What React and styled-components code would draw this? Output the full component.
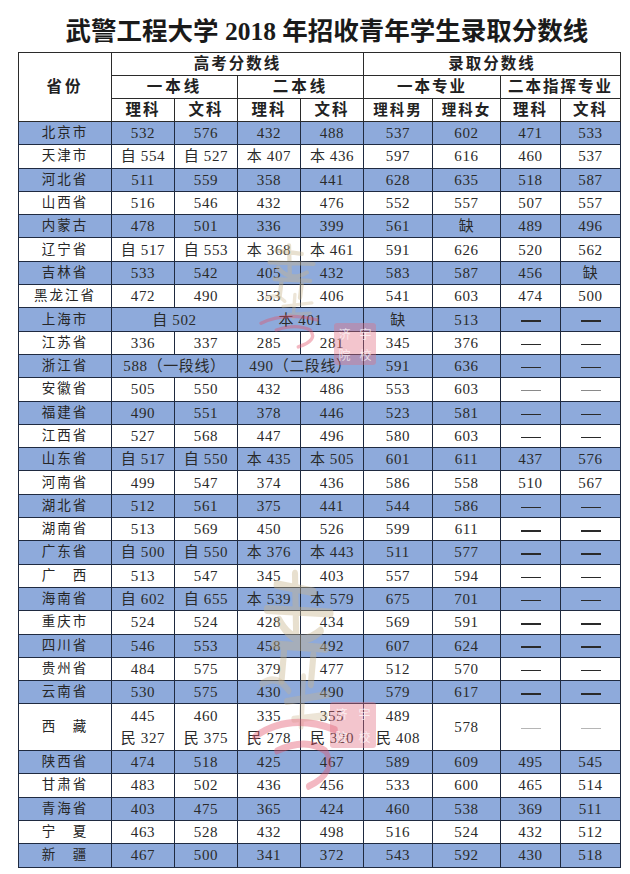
import React from "react";
import styled, { createGlobalStyle } from "styled-components";

const Global = createGlobalStyle`
  html, body { margin: 0; padding: 0; background: #fff; }
  body { font-family: "Liberation Serif", "Noto Sans CJK SC", serif; }
`;

const Page = styled.div`
  width: 630px;
  height: 874px;
  display: flex;
  flex-direction: column;
  align-items: flex-start;
  background: #fff;
  overflow: hidden;
`;

const Title = styled.h1`
  align-self: stretch;
  margin: 16px 0 0;
  padding-left: 24px;
  height: 36px;
  font-family: "Liberation Serif", "Noto Sans CJK SC", serif;
  font-size: 25.5px;
  line-height: 32px;
  font-weight: 700;
  color: #1a1a1a;
  text-align: center;
  white-space: nowrap;
`;

const TableWrap = styled.div`
  position: relative;
  margin-left: 18px;
`;

const Table = styled.table`
  border-collapse: collapse;
  table-layout: fixed;
  width: 602px;
  border: 1px solid #1f2a40;
`;

const HeadCell = styled.th`
  height: 22px;
  padding: 0;
  border: 1px solid #2b2b2b;
  background: #fff;
  color: #222;
  font-family: "Liberation Serif", "Noto Sans CJK SC", serif;
  font-size: ${(p) => (p.$small ? 14.5 : 15.5)}px;
  font-weight: 700;
  letter-spacing: ${(p) => (p.$wide ? 3 : 2)}px;
  text-align: center;
  vertical-align: middle;
  line-height: 18px;
`;

const Row = styled.tr`
  background: ${(p) => (p.$blue ? "#8eaadb" : "#ffffff")};
  height: ${(p) => (p.$double ? 46.6 : 23.3)}px;
`;

const NameCell = styled.td`
  padding: 0;
  border: 1px solid #1f2a40;
  color: #262626;
  font-size: 13.5px;
  letter-spacing: 2px;
  text-align: center;
  vertical-align: middle;
  line-height: 16px;
  white-space: pre;
`;

const Cell = styled.td`
  padding: 0;
  border: 1px solid #1f2a40;
  color: ${(p) => (p.$muted ? "#b5b5b5" : p.$soft ? "#8a8a8a" : "#2a2a2a")};
  font-size: 15px;
  letter-spacing: 0.6px;
  text-align: center;
  vertical-align: middle;
  line-height: 22px;
  white-space: nowrap;
`;

const Dash = styled.span`
  display: inline-block;
  width: 20px;
  height: ${(p) => (p.$thin ? 1 : 1.5)}px;
  vertical-align: middle;
  background: currentColor;
`;

const Mark = styled.svg`
  position: absolute;
  left: ${(p) => p.$x}px;
  top: ${(p) => p.$y}px;
  pointer-events: none;
  opacity: 0.75;
`;

const Seal = styled.div`
  position: absolute;
  left: ${(p) => p.$x}px;
  top: ${(p) => p.$y}px;
  width: ${(p) => p.$s}px;
  height: ${(p) => p.$s}px;
  display: grid;
  grid-template-columns: 1fr 1fr;
  align-items: center;
  border-radius: 3px;
  background: rgba(226, 110, 130, 0.4);
  color: rgba(255, 255, 255, 0.7);
  font-family: "Noto Sans CJK SC", sans-serif;
  font-size: 12px;
  line-height: 14px;
  text-align: center;
  pointer-events: none;
`;

const D = "—";

const rows = [
  ["北京市", ["532", "576", "432", "488", "537", "602", "471", "533"]],
  ["天津市", ["自 554", "自 527", "本 407", "本 436", "597", "616", "460", "537"]],
  ["河北省", ["511", "559", "358", "441", "628", "635", "518", "587"]],
  ["山西省", ["516", "546", "432", "476", "552", "557", "507", "557"]],
  ["内蒙古", ["478", "501", "336", "399", "561", "缺", "489", "496"]],
  ["辽宁省", ["自 517", "自 553", "本 368", "本 461", "591", "626", "520", "562"]],
  ["吉林省", ["533", "542", "405", "432", "583", "587", "456", "缺"]],
  ["黑龙江省", ["472", "490", "353", "406", "541", "603", "474", "500"]],
  ["上海市", [{ t: "自 502", span: 2 }, { t: "本 401", span: 2 }, "缺", "513", D, D]],
  ["江苏省", ["336", "337", "285", "281", "345", "376", D, D]],
  ["浙江省", [{ t: "588（一段线）", span: 2 }, { t: "490（二段线）", span: 2 }, "591", "636", D, D]],
  ["安徽省", ["505", "550", "432", "486", "553", "603", { d: "muted" }, { d: "muted" }]],
  ["福建省", ["490", "551", "378", "446", "523", "581", D, D]],
  ["江西省", ["527", "568", "447", "496", "580", "603", D, D]],
  ["山东省", ["自 517", "自 550", "本 435", "本 505", "601", "611", "437", "576"]],
  ["河南省", ["499", "547", "374", "436", "586", "558", "510", "567"]],
  ["湖北省", ["512", "561", "375", "441", "544", "586", D, D]],
  ["湖南省", ["513", "569", "450", "526", "599", "611", D, D]],
  ["广东省", ["自 500", "自 550", "本 376", "本 443", "511", "577", D, D]],
  ["广　西", ["513", "547", "345", "403", "557", "594", D, D]],
  ["海南省", ["自 602", "自 655", "本 539", "本 579", "675", "701", D, D]],
  ["重庆市", ["524", "524", "428", "434", "569", "591", D, D]],
  ["四川省", ["546", "553", "458", "492", "607", "624", D, D]],
  ["贵州省", ["484", "575", "379", "477", "512", "570", D, D]],
  ["云南省", ["530", "575", "430", "490", "579", "617", D, D]],
  [
    "西　藏",
    [
      { two: ["445", "民 327"] },
      { two: ["460", "民 375"] },
      { two: ["335", "民 278"] },
      { two: ["355", "民 320"] },
      { two: ["489", "民 408"] },
      "578",
      { d: "faint" },
      { d: "faint" },
    ],
    true,
  ],
  ["陕西省", ["474", "518", "425", "467", "589", "609", "495", "545"]],
  ["甘肃省", ["483", "502", "436", "456", "533", "600", "465", "514"]],
  ["青海省", ["403", "475", "365", "424", "460", "538", "369", "511"]],
  ["宁　夏", ["463", "528", "432", "498", "516", "524", "432", "512"]],
  ["新　疆", ["467", "500", "341", "372", "543", "592", "430", "518"]],
];

const widths = [93, 63, 63, 63, 63, 69, 68, 60, 60];

function renderCell(c, i) {
  if (c === D) {
    return (
      <Cell key={i}>
        <Dash />
      </Cell>
    );
  }
  if (typeof c === "string") return <Cell key={i}>{c}</Cell>;
  if (c.d === "muted")
    return (
      <Cell key={i} $soft>
        <Dash $thin />
      </Cell>
    );
  if (c.d === "faint")
    return (
      <Cell key={i} $muted>
        <Dash $thin />
      </Cell>
    );
  if (c.two)
    return (
      <Cell key={i}>
        {c.two[0]}
        <br />
        {c.two[1]}
      </Cell>
    );
  return (
    <Cell key={i} colSpan={c.span}>
      {c.t}
    </Cell>
  );
}

function Calligraphy() {
  return (
    <g fill="none" strokeLinecap="round" strokeLinejoin="round">
      <path
        d="M30 10 L60 14 M45 4 L46 40 M22 24 L74 26 M32 30 Q46 48 66 36 M28 44 L70 46 M36 48 L34 64 M60 50 L58 66"
        stroke="#c9b48a"
        strokeWidth="5"
        opacity="0.55"
      />
      <path
        d="M18 66 Q30 60 40 70 M52 62 L50 90 M38 76 L72 72 M44 86 L70 84"
        stroke="#c9b48a"
        strokeWidth="4"
        opacity="0.45"
      />
      <path
        d="M12 96 Q40 82 78 92 M30 104 Q54 96 70 104 Q80 116 56 124"
        stroke="#e2536c"
        strokeWidth="4"
        opacity="0.55"
      />
    </g>
  );
}

function SealText() {
  return (
    <>
      <span>济</span>
      <span>宇</span>
      <span>院</span>
      <span>校</span>
    </>
  );
}

export default function App() {
  return (
    <Page>
      <Global />
      <Title>武警工程大学 2018 年招收青年学生录取分数线</Title>
      <TableWrap>
        <Table>
          <colgroup>
            {widths.map((w, i) => (
              <col key={i} style={{ width: w }} />
            ))}
          </colgroup>
          <thead>
            <tr>
              <HeadCell rowSpan={3} $wide>省份</HeadCell>
              <HeadCell colSpan={4}>高考分数线</HeadCell>
              <HeadCell colSpan={4}>录取分数线</HeadCell>
            </tr>
            <tr>
              <HeadCell colSpan={2} $wide>一本线</HeadCell>
              <HeadCell colSpan={2} $wide>二本线</HeadCell>
              <HeadCell colSpan={2}>一本专业</HeadCell>
              <HeadCell colSpan={2}>二本指挥专业</HeadCell>
            </tr>
            <tr>
              <HeadCell>理科</HeadCell>
              <HeadCell>文科</HeadCell>
              <HeadCell>理科</HeadCell>
              <HeadCell>文科</HeadCell>
              <HeadCell $small>理科男</HeadCell>
              <HeadCell $small>理科女</HeadCell>
              <HeadCell>理科</HeadCell>
              <HeadCell>文科</HeadCell>
            </tr>
          </thead>
          <tbody>
            {rows.map(([name, cells, dbl], r) => (
              <Row key={name} $blue={r % 2 === 0} $double={dbl}>
                <NameCell>{name}</NameCell>
                {cells.map(renderCell)}
              </Row>
            ))}
          </tbody>
        </Table>
        <Mark $x={226} $y={190} width="90" height="110" viewBox="0 0 90 130">
          <Calligraphy />
        </Mark>
        <Seal $x={316} $y={271} $s={42}>
          <SealText />
        </Seal>
        <Mark $x={222} $y={515} width="110" height="230" viewBox="0 0 90 130" preserveAspectRatio="none">
          <Calligraphy />
        </Mark>
        <Seal $x={312} $y={650} $s={46}>
          <SealText />
        </Seal>
      </TableWrap>
    </Page>
  );
}
